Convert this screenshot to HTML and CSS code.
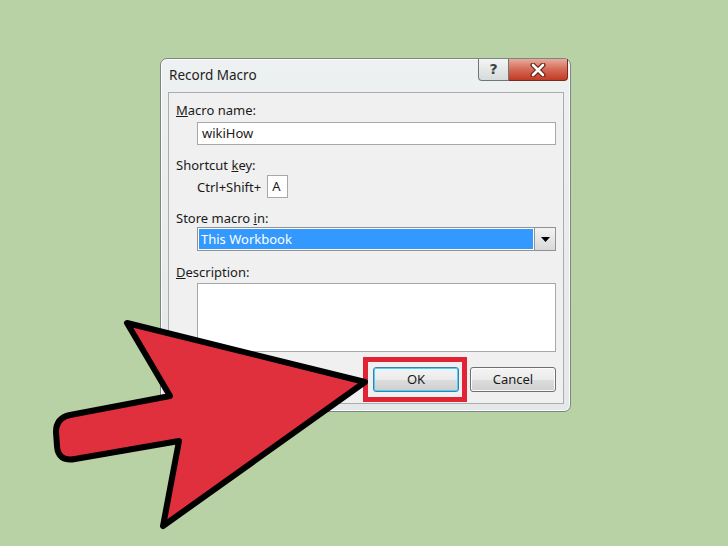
FILE: index.html
```html
<!DOCTYPE html>
<html lang="en">
<head>
    <meta charset="UTF-8">
    <title>Record Macro</title>
    <link rel="stylesheet" href="styles.css">
</head>
<body>
    <div class="dialog">
        <div class="titlebar">
            <span class="title">Record Macro</span>
            <div class="caption-buttons">
                <span class="btn-help">?</span>
                <span class="btn-close">
                    <svg width="20" height="14" viewBox="0 0 20 14">
                        <path d="M5 2 L15 12 M15 2 L5 12" stroke="#6b2418" stroke-width="5" stroke-linecap="round"/>
                        <path d="M5 2 L15 12 M15 2 L5 12" stroke="#fff" stroke-width="2.6" stroke-linecap="round"/>
                    </svg>
                </span>
            </div>
        </div>

        <div class="panel">
            <div class="label first"><u>M</u>acro name:</div>
            <div class="field">wikiHow</div>

            <div class="label">Shortcut <u>k</u>ey:</div>
            <div class="shortcut">
                <span class="keys">Ctrl+Shift+</span>
                <span class="keybox">A</span>
            </div>

            <div class="label">Store macro <u>i</u>n:</div>
            <div class="select">
                <span class="selected">This Workbook</span>
                <span class="drop">
                    <svg width="9" height="5" viewBox="0 0 9 5"><path d="M0 0 L9 0 L4.5 5 Z" fill="#000"/></svg>
                </span>
            </div>

            <div class="label desc"><u>D</u>escription:</div>
            <div class="textarea"></div>

            <div class="buttons">
                <span class="button ok">OK</span>
                <span class="button">Cancel</span>
            </div>
        </div>
    </div>

    <!--指向OK按钮的红色箭头-->
    <svg class="arrow" width="728" height="546" viewBox="0 0 728 546">
        <path d="M127 323 L365 382 L163 526 L179 441 L75 459 Q58 462 57 446 L56 432 Q56 418 70 415 L170 396 Z"
              fill="#e02f3d" stroke="#000" stroke-width="6" stroke-linejoin="round"/>
    </svg>
</body>
</html>
```

FILE: styles.css
```css
*{
    margin: 0;
    padding: 0;
    box-sizing: border-box;
}
body{
    width: 728px;
    height: 546px;
    background-color: #b9d2a5;
    font-family: "Noto Sans", "Liberation Sans", sans-serif;
    font-size: 13px;
    color: #1a1a1a;
    position: relative;
    overflow: hidden;
    padding: 58px 0 0 160px;
}

/*对话框外框*/
.dialog{
    width: 411px;
    height: 354px;
    background: linear-gradient(#eef1f1, #e4e8e8);
    border: 1px solid #7f8585;
    border-radius: 7px;
    box-shadow: inset 0 0 0 1px #fbfdfd;
    display: flex;
    flex-direction: column;
}
.titlebar{
    height: 33px;
    display: flex;
    justify-content: space-between;
    padding-left: 8px;
}
.title{
    font-size: 13.5px;
    line-height: 33px;
    color: #222;
}
.caption-buttons{
    display: flex;
    margin-right: 2px;
    height: 23px;
}
.btn-help{
    width: 31px;
    height: 22px;
    border: 1px solid #6f7676;
    border-top: none;
    border-radius: 0 0 0 4px;
    background: linear-gradient(#f4f5f5, #d6dada);
    text-align: center;
    font-family: "DejaVu Sans", sans-serif;
    font-size: 14px;
    font-weight: bold;
    line-height: 21px;
    color: #3a4242;
}
.btn-close{
    width: 59px;
    height: 22px;
    border: 1px solid #7a2a1e;
    border-top: none;
    border-left: none;
    border-radius: 0 0 4px 0;
    background: linear-gradient(#e8ab9c, #d46a55 50%, #c23a24);
    display: flex;
    align-items: center;
    justify-content: center;
}

/*内容面板*/
.panel{
    flex: 1;
    margin: 0 6px 7px 7px;
    background-color: #f0f0f0;
    border: 1px solid #a9adad;
    padding: 0 7px 0 7px;
}
.label{
    height: 18px;
    line-height: 18px;
    margin-top: 11px;
}
.label.first{
    margin-top: 8px;
}
.label.desc{
    margin-top: 12px;
}
.field{
    margin: 3px 0 0 21px;
    height: 23px;
    background: #fff;
    border: 1px solid #a5a9a9;
    padding-left: 4px;
    line-height: 21px;
}
.shortcut{
    margin: 1px 0 0 21px;
    display: flex;
    align-items: center;
    height: 23px;
}
.keys{
    margin-right: 6px;
}
.keybox{
    width: 21px;
    height: 23px;
    background: #fff;
    border: 1px solid #a5a9a9;
    line-height: 21px;
    padding-left: 4px;
}
.select{
    margin-left: 21px;
    height: 24px;
    background: #fff;
    border: 1px solid #8f9393;
    display: flex;
    padding: 1px;
}
.selected{
    flex: 1;
    background-color: #3399ff;
    color: #fff;
    line-height: 20px;
    padding-left: 2px;
}
.drop{
    width: 21px;
    margin: -1px -1px -1px 1px;
    border-left: 1px solid #8f9393;
    background: linear-gradient(#f2f2f2, #d9d9d9);
    display: flex;
    align-items: center;
    justify-content: center;
}
.textarea{
    margin: 2px 0 0 21px;
    height: 69px;
    background: #fff;
    border: 1px solid #a5a9a9;
}
.buttons{
    display: flex;
    justify-content: flex-end;
    gap: 11px;
    margin-top: 15px;
}
.button{
    width: 86px;
    height: 25px;
    border: 1px solid #707070;
    border-radius: 3px;
    background: linear-gradient(#f4f4f4, #ebebeb 50%, #dddddd 51%, #cfcfcf);
    text-align: center;
    line-height: 23px;
    box-shadow: inset 0 0 0 1px #fbfbfb;
}
/*OK按钮：蓝色焦点边框*/
.button.ok{
    position: relative;
    border-color: #3c7fb1;
    box-shadow: inset 0 0 0 1px #48d2f5;
}
/*红色高亮框，方角*/
.button.ok::after{
    content: "";
    position: absolute;
    left: -11px;
    right: -9px;
    top: -11px;
    bottom: -11px;
    border: 5px solid #e02435;
}

/*箭头浮在对话框上*/
.arrow{
    position: absolute;
    left: 0;
    top: 0;
}
```
